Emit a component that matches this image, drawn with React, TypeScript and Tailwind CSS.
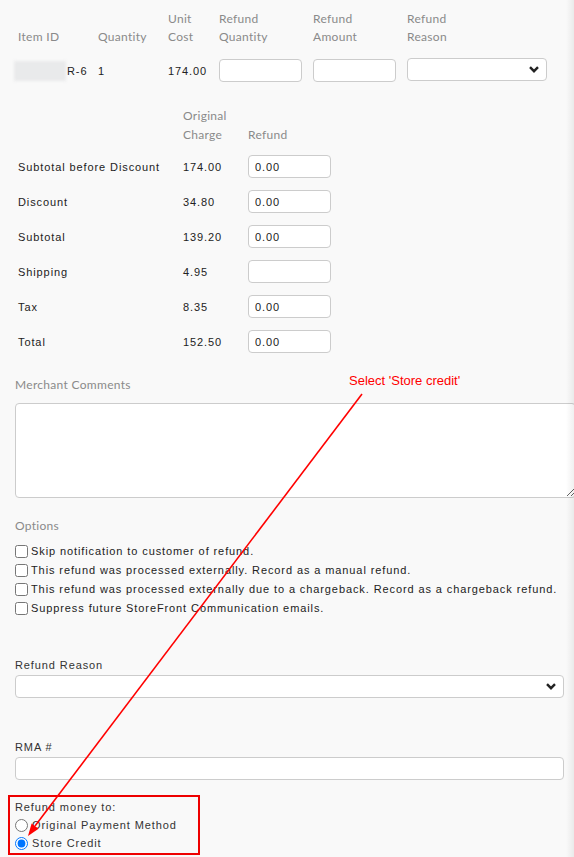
import React from "react";

const head = "font-['Lato',sans-serif] text-[12px] leading-[18px] tracking-[0.3px] text-[#8a8a8a]";
const body = "font-['Liberation_Sans',Arial,sans-serif] text-[11px] tracking-[0.9px] text-[#222]";
const box = "h-[23px] rounded-[4px] border border-[#cccccc] bg-white";

function Chevron() {
  return (
    <svg className="pointer-events-none absolute right-[8px] top-[8px]" width="10" height="7" viewBox="0 0 10 7">
      <path d="M1 1.2 L5 5.2 L9 1.2" fill="none" stroke="#222" strokeWidth="2.4" />
    </svg>
  );
}

function SelectBox({ className }: { className: string }) {
  return (
    <div className={`relative ${className}`}>
      <select className={`${box} w-full appearance-none`} />
      <Chevron />
    </div>
  );
}

const charges = [
  ["Subtotal before Discount", "174.00", "0.00"],
  ["Discount", "34.80", "0.00"],
  ["Subtotal", "139.20", "0.00"],
  ["Shipping", "4.95", ""],
  ["Tax", "8.35", "0.00"],
  ["Total", "152.50", "0.00"],
];

const options = [
  "Skip notification to customer of refund.",
  "This refund was processed externally. Record as a manual refund.",
  "This refund was processed externally due to a chargeback. Record as a chargeback refund.",
  "Suppress future StoreFront Communication emails.",
];

export default function App() {
  return (
    <div className="relative min-h-screen w-[574px] overflow-hidden bg-[#f9f9f9]">
      <div className="px-[15px] pt-[10px] pb-[10px]">
        {/* line items */}
        <div className="grid grid-cols-[80px_70px_51px_94px_94px_140px] items-end pl-[3px]">
          <div className={head}>Item ID</div>
          <div className={head}>Quantity</div>
          <div className={head}>Unit<br />Cost</div>
          <div className={head}>Refund<br />Quantity</div>
          <div className={head}>Refund<br />Amount</div>
          <div className={head}>Refund<br />Reason</div>
        </div>
        <div className="mt-[12px] grid h-[23px] grid-cols-[80px_70px_51px_94px_94px_140px] items-center pl-[3px]">
          <div className="-ml-[4px] flex items-center">
            <div className="h-[20px] w-[52px] bg-[#e9eaeb] blur-[1.5px]" />
            <span className={`${body} ml-px pt-[1px]`}>R-6</span>
          </div>
          <div className={`${body} pt-[1px] text-[#1b2a4a]`}>1</div>
          <div className={`${body} pt-[1px]`}>174.00</div>
          <input className={`${box} w-[83px]`} />
          <input className={`${box} w-[83px]`} />
          <SelectBox className="w-[140px]" />
        </div>

        {/* charges */}
        <div className="mt-[25px] grid grid-cols-[165px_65px_83px] items-end pl-[3px]">
          <div />
          <div className={`${head} leading-[19px]`}>Original<br />Charge</div>
          <div className={`${head} leading-[19px]`}>Refund</div>
        </div>
        <div className="mt-[11px] flex flex-col gap-[12px] pl-[3px]">
          {charges.map(([label, orig, refund]) => (
            <div key={label} className="grid h-[23px] grid-cols-[165px_65px_83px] items-center">
              <div className={`${body} pt-[2px]`}>{label}</div>
              <div className={`${body} pt-[2px]`}>{orig}</div>
              <input className={`${box} w-[83px] px-[6px] ${body}`} defaultValue={refund} />
            </div>
          ))}
        </div>

        {/* comments */}
        <div className={`${head} mt-[23px]`}>Merchant Comments</div>
        <textarea className="mt-[9px] block h-[95px] w-[561px] rounded-[4px] border border-[#cccccc] bg-white" />

        {/* options */}
        <div className={`${head} mt-[19px]`}>Options</div>
        <div className="mt-[7px] flex flex-col">
          {options.map((o) => (
            <label key={o} className={`${body} flex h-[19px] items-center gap-[3px]`}>
              <input type="checkbox" className="m-0 h-[13px] w-[13px]" />
              <span>{o}</span>
            </label>
          ))}
        </div>

        <div className={`${body} mt-[38px] leading-[18px] text-[#333]`}>Refund Reason</div>
        <SelectBox className="mt-[1px] w-[549px]" />

        <div className={`${body} mt-[38px] leading-[18px] text-[#333]`}>RMA #</div>
        <input className={`${box} mt-[1px] block w-[549px]`} />

        {/* refund destination */}
        <div className="-ml-[7px] mt-[15px] w-[192px] border-2 border-[#ee0000] pb-[1px] pl-[5px] pt-[1px]">
          <div className={`${body} leading-[18px] text-[#333]`}>Refund money to:</div>
          <label className={`${body} flex h-[18px] items-center gap-[4px] text-[#333]`}>
            <input type="radio" name="dest" className="m-0 h-[13px] w-[13px]" />
            <span>Original Payment Method</span>
          </label>
          <label className={`${body} flex h-[18px] items-center gap-[4px] text-[#333]`}>
            <input type="radio" name="dest" defaultChecked className="m-0 h-[13px] w-[13px]" />
            <span>Store Credit</span>
          </label>
        </div>
      </div>

      {/* page edge shadow */}
      <div className="pointer-events-none absolute right-0 top-0 h-full w-[8px] bg-gradient-to-r from-transparent to-black/[0.06]" />

      {/* annotation */}
      <div className="pointer-events-none absolute left-[349px] top-[373px] font-['Liberation_Sans',Arial,sans-serif] text-[13px] leading-[16px] text-[#ff0000]">
        Select 'Store credit'
      </div>
      <svg className="pointer-events-none absolute left-0 top-0" width="574" height="857">
        <line x1="362" y1="394" x2="35" y2="826" stroke="#ff0000" strokeWidth="1.6" />
        <polygon points="28,836 38.6,828.8 31.6,823.6" fill="#ff0000" />
      </svg>
    </div>
  );
}
